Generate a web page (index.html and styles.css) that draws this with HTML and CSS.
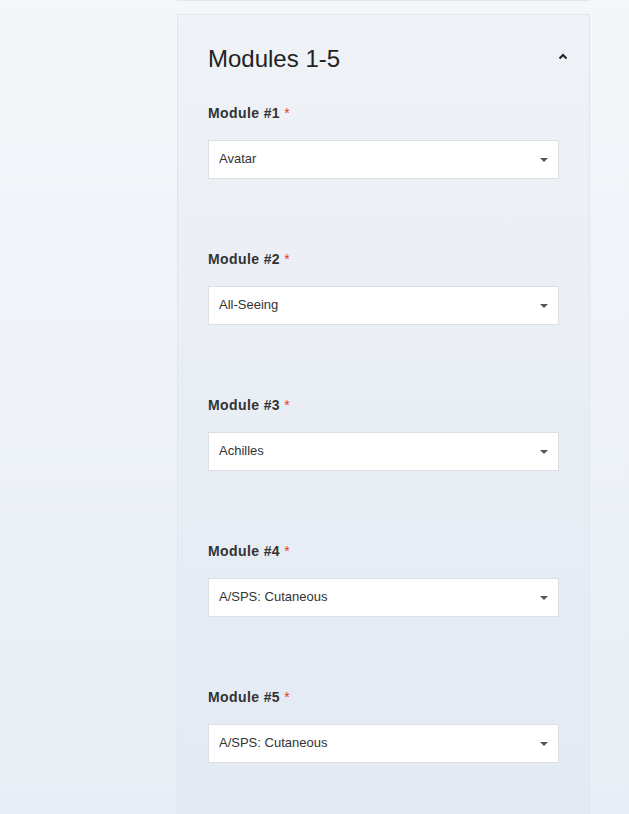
FILE: index.html
```html
<!DOCTYPE html>
<html>
<head>
<meta charset="utf-8">
<link rel="stylesheet" href="styles.css">
</head>
<body>
<div class="page">
  <div class="column">
    <div class="prev-card"></div>
    <div class="card">
      <div class="card-head">
        <h2 class="title">Modules 1-5</h2>
        <svg class="chev" width="10" height="7" viewBox="0 0 10 7"><polyline points="1.5,5.5 5,2 8.5,5.5" fill="none" stroke="#222" stroke-width="2"/></svg>
      </div>
      <div class="fields">
        <div class="field">
          <div class="label">Module #1 <span class="req">*</span></div>
          <div class="select"><span class="value">Avatar</span><span class="caret"></span></div>
        </div>
        <div class="field">
          <div class="label">Module #2 <span class="req">*</span></div>
          <div class="select"><span class="value">All-Seeing</span><span class="caret"></span></div>
        </div>
        <div class="field">
          <div class="label">Module #3 <span class="req">*</span></div>
          <div class="select"><span class="value">Achilles</span><span class="caret"></span></div>
        </div>
        <div class="field">
          <div class="label">Module #4 <span class="req">*</span></div>
          <div class="select"><span class="value">A/SPS: Cutaneous</span><span class="caret"></span></div>
        </div>
        <div class="field">
          <div class="label">Module #5 <span class="req">*</span></div>
          <div class="select"><span class="value">A/SPS: Cutaneous</span><span class="caret"></span></div>
        </div>
      </div>
    </div>
  </div>
</div>
</body>
</html>
```
FILE: styles.css
```css
html, body {
  margin: 0;
  padding: 0;
}
body {
  font-family: "Liberation Sans", Arial, sans-serif;
  background: linear-gradient(180deg, #f4f7fa 0%, #e8eef5 100%);
  min-height: 814px;
  overflow: hidden;
}
.page {
  height: 814px;
  display: flex;
  justify-content: flex-start;
}
.column {
  margin-left: 177px;
  width: 413px;
  display: flex;
  flex-direction: column;
}
.prev-card {
  height: 1px;
  border-bottom: 1px solid #e3e7eb;
  margin-top: -1px;
}
.card {
  margin-top: 13px;
  border: 1px solid #e1e6eb;
  border-bottom: none;
  background: linear-gradient(180deg, #eff2f6 0%, #e3eaf3 100%);
  padding: 29px 30px 0 30px;
  flex: 1;
  display: flex;
  flex-direction: column;
  gap: 29px;
}
.card-head {
  display: flex;
  align-items: center;
  justify-content: space-between;
  height: 30px;
}
.title {
  margin: 0;
  font-size: 24px;
  line-height: 30px;
  font-weight: normal;
  color: #222;
}
.chev {
  margin-right: -9px;
  margin-top: -5px;
}
.fields {
  display: flex;
  flex-direction: column;
  gap: 70px;
}
.label {
  font-size: 14px;
  line-height: 20px;
  font-weight: bold;
  color: #333;
  letter-spacing: 0.4px;
}
.req {
  color: #e53935;
  font-weight: normal;
}
.select {
  margin-top: 17px;
  height: 37px;
  border: 1px solid #dcdfe3;
  background: #fff;
  display: flex;
  align-items: center;
  justify-content: space-between;
  padding: 0 10px 0 10px;
  font-size: 13px;
  color: #333;
}
.value {
  margin-top: -2px;
}
.caret {
  width: 0;
  height: 0;
  border-left: 4px solid transparent;
  border-right: 4px solid transparent;
  border-top: 4px solid #555;
  margin-top: 1px;
}
```
